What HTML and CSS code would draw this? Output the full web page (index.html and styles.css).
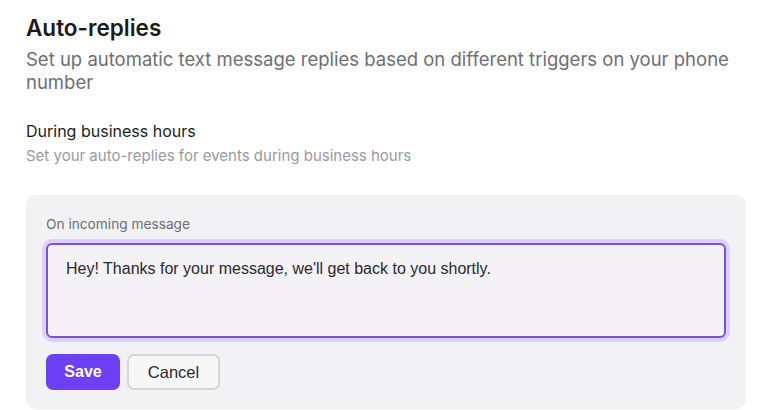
FILE: index.html
```html
<!DOCTYPE html>
<html lang="en">
<head>
    <meta charset="UTF-8">
    <title>Auto-replies</title>
    <link rel="stylesheet" href="styles.css">
</head>
<body>
    <div class="page">
        <h1>Auto-replies</h1>
        <p class="intro">Set up automatic text message replies based on different triggers on your phone number</p>

        <h2>During business hours</h2>
        <p class="hint">Set your auto-replies for events during business hours</p>

        <div class="card">
            <label class="field-label" for="incoming">On incoming message</label>
            <textarea id="incoming" class="message">Hey! Thanks for your message, we'll get back to you shortly.</textarea>
            <div class="actions">
                <button class="btn btn-primary">Save</button>
                <button class="btn btn-secondary">Cancel</button>
            </div>
        </div>
    </div>
</body>
</html>
```

FILE: styles.css
```css
body {
    margin: 0;
    font-family: Inter, "Noto Sans", sans-serif;
    background-color: #ffffff;
    color: #1c1c1e;
}

.page {
    width: 720px;
    padding: 13px 0 0 26px;
}

h1 {
    margin: 0;
    font-size: 22.5px;
    line-height: 30px;
    font-weight: 600;
    color: #1a1a1a;
}

.intro {
    margin: 5px 0 0;
    font-size: 18.5px;
    line-height: 23px;
    color: #6e6e73;
}

h2 {
    margin: 26px 0 0;
    font-size: 16px;
    line-height: 22px;
    font-weight: 400;
    color: #1c1c1e;
}

.hint {
    margin: 4px 0 0;
    font-size: 15px;
    line-height: 20px;
    color: #9a9a9e;
}

.card {
    margin-top: 29px;
    background-color: #f2f1f4;
    border-radius: 10px;
    padding: 20px 20px 19px;
}

.field-label {
    display: block;
    font-size: 13.7px;
    line-height: 18px;
    color: #6e6e73;
}

.message {
    display: block;
    box-sizing: border-box;
    width: 680px;
    height: 95px;
    margin-top: 10px;
    padding: 14px 18px;
    border: 2px solid #7b4fe0;
    border-radius: 6px;
    box-shadow: 0 0 0 4px #ddd1fb;
    background-color: #f4f2f6;
    font-family: "Liberation Sans", Arial, sans-serif;
    font-size: 16px;
    line-height: 20px;
    color: #2a2a2c;
    resize: none;
    outline: none;
}

.actions {
    display: flex;
    gap: 7px;
    margin-top: 16px;
}

.btn {
    height: 36px;
    border-radius: 7px;
    font-family: "Liberation Sans", Arial, sans-serif;
    font-size: 16px;
    cursor: pointer;
}

.btn-primary {
    width: 74px;
    border: none;
    background-color: #6d3ff5;
    color: #ffffff;
    font-weight: 700;
}

.btn-secondary {
    width: 93px;
    border: 2px solid #d6d6d8;
    background-color: #f7f7f8;
    color: #2a2a2c;
    font-size: 16.5px;
}
```
